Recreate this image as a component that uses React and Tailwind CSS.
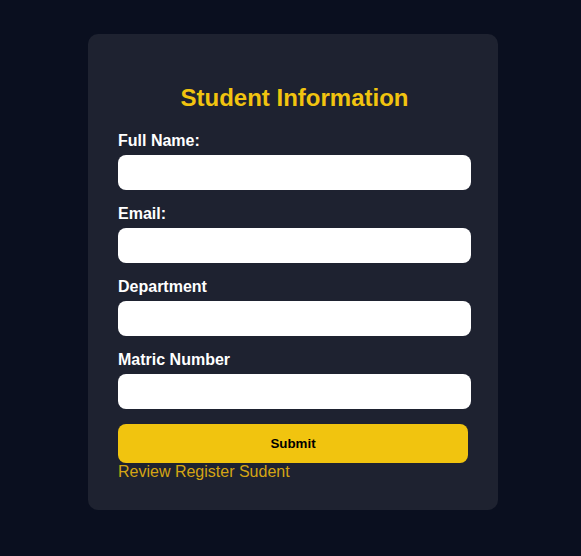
import React, { useState } from 'react';

const fields = [
  { name: 'fullName', label: 'Full Name:' },
  { name: 'email', label: 'Email:' },
  { name: 'department', label: 'Department' },
  { name: 'matric', label: 'Matric Number' },
];

const App = () => {
  const [form, setForm] = useState({});

  return (
    <div
      className="min-h-[556px] bg-[#0a0f1f] flex pl-[88px] pt-[34px]"
      style={{ fontFamily: '"Liberation Sans", Arial, sans-serif' }}
    >
      <div className="w-[410px] h-[476px] bg-[#1e2230] rounded-[10px] pl-[30px] pr-[27px] pt-[50px]">
        <h2 className="text-[24px] leading-[28px] font-bold text-[#f1c40f] text-center mb-[20px]">
          Student Information
        </h2>
        <form onSubmit={(e) => e.preventDefault()}>
          {fields.map((f) => (
            <div key={f.name} className="mb-[15px]">
              <label className="block text-white font-bold text-[16px] leading-[18px] mb-[5px]">
                {f.label}
              </label>
              <input
                type="text"
                value={form[f.name] || ''}
                onChange={(e) => setForm({ ...form, [f.name]: e.target.value })}
                className="block w-full h-[35px] bg-white rounded-[8px] px-3 outline-none"
              />
            </div>
          ))}
          <button
            type="submit"
            className="w-[350px] h-[39px] bg-[#f1c40f] rounded-[8px] text-black font-bold text-[13.33px]"
          >
            Submit
          </button>
        </form>
        <a href="#" className="block text-[#d4a514] text-[16px] leading-[18px]">
          Review Register Sudent
        </a>
      </div>
    </div>
  );
};

export default App;
